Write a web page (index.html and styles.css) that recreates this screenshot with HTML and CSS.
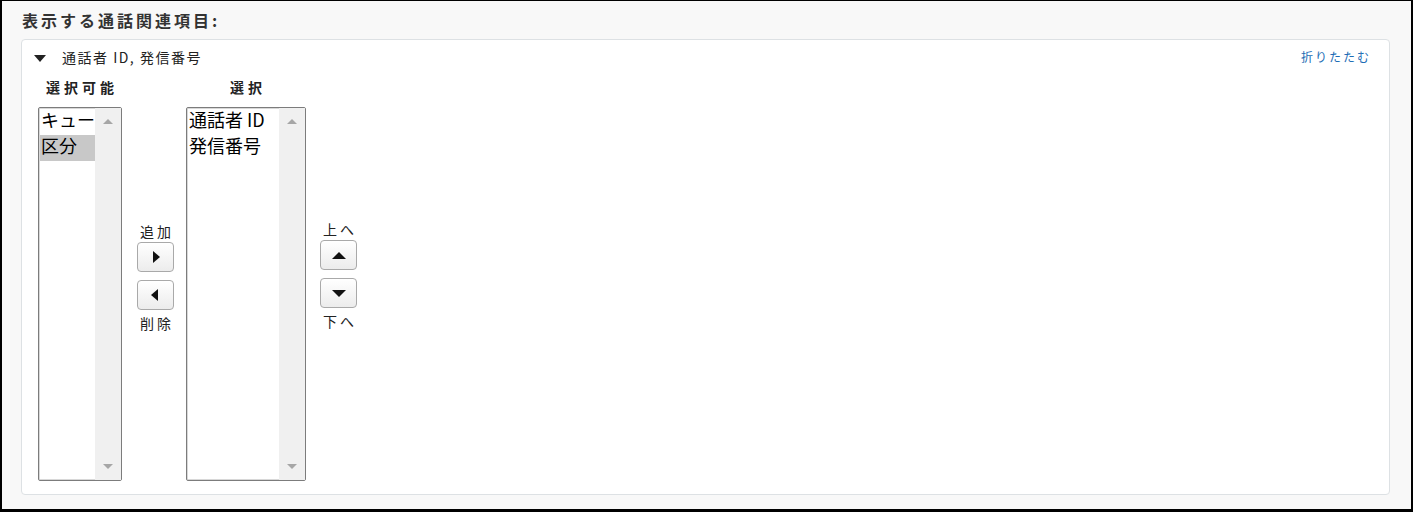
FILE: index.html
```html
<!DOCTYPE html>
<html>
<head>
<title>表示する通話関連項目</title>
<link rel="stylesheet" href="styles.css">
</head>
<body>

<div class="frame">
  <div class="heading">表示する通話関連項目:</div>

  <div class="panel">
    <div class="panel-head">
      <span class="caret"></span>
      <span class="panel-title">通話者 ID, 発信番号</span>
      <a class="collapse" href="#">折りたたむ</a>
    </div>

    <div class="picker">
      <div class="col">
        <div class="col-label">選択可能</div>
        <div class="listbox narrow">
          <div class="items">
            <div class="item">キュー</div>
            <div class="item selected">区分</div>
          </div>
          <div class="scroll"><span class="sb-up"></span><span class="sb-down"></span></div>
        </div>
      </div>

      <div class="btns add-remove">
        <div class="btn-label">追加</div>
        <button class="btn"><span class="arrow right"></span></button>
        <button class="btn second"><span class="arrow left"></span></button>
        <div class="btn-label below">削除</div>
      </div>

      <div class="col">
        <div class="col-label">選択</div>
        <div class="listbox wide">
          <div class="items">
            <div class="item">通話者 ID</div>
            <div class="item">発信番号</div>
          </div>
          <div class="scroll"><span class="sb-up"></span><span class="sb-down"></span></div>
        </div>
      </div>

      <div class="btns up-down">
        <div class="btn-label">上へ</div>
        <button class="btn"><span class="arrow up"></span></button>
        <button class="btn second"><span class="arrow down"></span></button>
        <div class="btn-label below">下へ</div>
      </div>
    </div>
  </div>
</div>

</body>
</html>
```

FILE: styles.css
```css
body {
  margin: 0;
  font-family: "Noto Sans CJK JP", "Liberation Sans", sans-serif;
  color: #222;
}

.frame {
  width: 1413px;
  height: 512px;
  box-sizing: border-box;
  border: 2px solid #000;
  border-top-width: 1px;
  border-bottom-width: 3px;
  background: #f8f8f8;
  padding: 11px 21px 0 19px;
}

.heading {
  font-size: 16px;
  font-weight: bold;
  line-height: 17px;
  letter-spacing: 3px;
  padding-left: 1px;
  color: #333;
}

.panel {
  margin-top: 10px;
  height: 456px;
  box-sizing: border-box;
  background: #fff;
  border: 1px solid #dde1e4;
  border-radius: 4px;
  padding: 9px 20px 0 16px;
}

.panel-head {
  display: flex;
  align-items: center;
  height: 16px;
  line-height: 16px;
}

.caret {
  width: 0;
  height: 0;
  border-left: 6px solid transparent;
  border-right: 6px solid transparent;
  border-top: 7px solid #222;
  margin: 3px 16px 0 -4px;
}

.panel-title {
  font-size: 14px;
  letter-spacing: 1.5px;
  color: #222;
}

.collapse {
  margin-left: auto;
  margin-right: -2px;
  font-size: 12px;
  letter-spacing: 2px;
  color: #1d6db5;
  text-decoration: none;
}

.picker {
  display: flex;
  align-items: flex-start;
  margin-top: 14px;
}

.col {
  display: flex;
  flex-direction: column;
  align-items: center;
}

.col-label {
  font-size: 14px;
  font-weight: bold;
  line-height: 16px;
  letter-spacing: 4px;
  margin-right: -4px;
  color: #222;
}

.listbox {
  margin-top: 12px;
  height: 374px;
  box-sizing: border-box;
  border: 1px solid #7c7c7c;
  border-radius: 2px;
  box-shadow: inset 0 0 0 1px #d8d8d8;
  display: flex;
  background: #fff;
}

.listbox.narrow {
  width: 84px;
}

.listbox.wide {
  width: 120px;
}

.items {
  flex: 1;
  min-width: 0;
  padding: 1px 0 0 1px;
}

.item {
  font-size: 18px;
  line-height: 21px;
  padding: 0 0 5px 1px;
  color: #000;
  white-space: nowrap;
}

.item.selected {
  background: #c8c8c8;
}

.scroll {
  width: 26px;
  flex: none;
  background: #f0f0f0;
  position: relative;
}

.sb-up,
.sb-down {
  position: absolute;
  left: 8px;
  width: 0;
  height: 0;
  border-left: 5px solid transparent;
  border-right: 5px solid transparent;
}

.sb-up {
  top: 11px;
  border-bottom: 5px solid #a6a6a6;
}

.sb-down {
  bottom: 11px;
  border-top: 5px solid #a6a6a6;
}

.btns {
  display: flex;
  flex-direction: column;
  align-items: center;
}

.add-remove {
  margin: 0 12px 0 15px;
  padding-top: 144px;
}

.up-down {
  margin-left: 14px;
  padding-top: 142px;
}

.btn-label {
  font-size: 14px;
  line-height: 16px;
  letter-spacing: 3px;
  margin-right: -3px;
  color: #222;
}

.btn {
  width: 37px;
  height: 30px;
  margin-top: 3px;
  border: 1px solid #a9a9a9;
  border-radius: 4px;
  background: linear-gradient(#ffffff, #ececec);
  display: flex;
  align-items: center;
  justify-content: center;
  padding: 0;
}

.btn.second {
  margin-top: 8px;
}

.btn-label.below {
  margin-top: 5px;
}

.arrow {
  width: 0;
  height: 0;
}

.arrow.right {
  border-top: 6px solid transparent;
  border-bottom: 6px solid transparent;
  border-left: 7px solid #111;
  margin-left: 2px;
}

.arrow.left {
  border-top: 6px solid transparent;
  border-bottom: 6px solid transparent;
  border-right: 7px solid #111;
  margin-right: 2px;
}

.arrow.up {
  border-left: 7px solid transparent;
  border-right: 7px solid transparent;
  border-bottom: 7px solid #111;
}

.arrow.down {
  border-left: 7px solid transparent;
  border-right: 7px solid transparent;
  border-top: 7px solid #111;
}
```
